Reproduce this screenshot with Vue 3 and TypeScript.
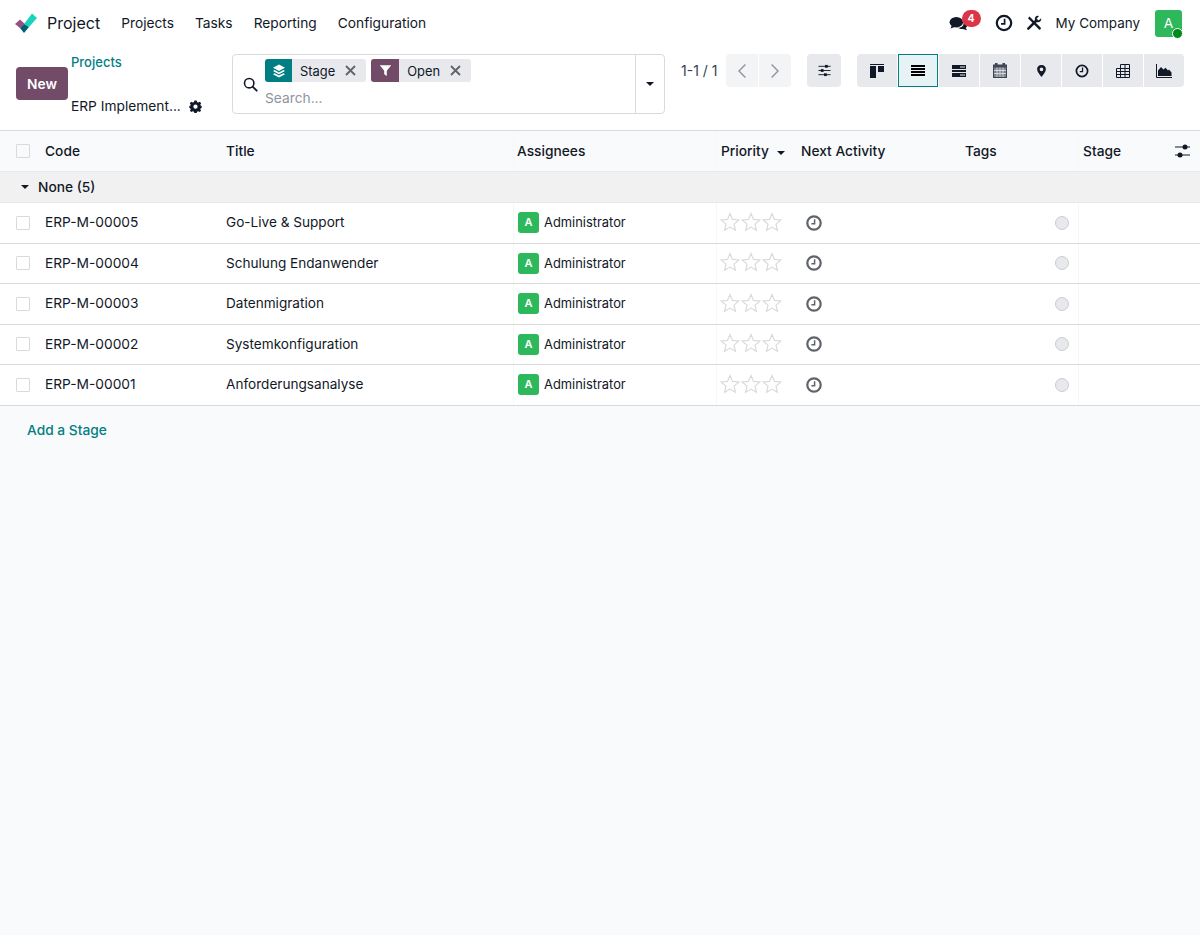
<script setup lang="ts">
const navItems = ["Projects", "Tasks", "Reporting", "Configuration"];
const tasks = [
  { code: "ERP-M-00005", title: "Go-Live & Support" },
  { code: "ERP-M-00004", title: "Schulung Endanwender" },
  { code: "ERP-M-00003", title: "Datenmigration" },
  { code: "ERP-M-00002", title: "Systemkonfiguration" },
  { code: "ERP-M-00001", title: "Anforderungsanalyse" },
];
const views = ["kanban", "list", "form", "calendar", "map", "activity", "pivot", "graph"];
</script>

<template>
  <div class="page">
    <header class="navbar">
      <svg class="logo" viewBox="0 0 24 24" width="24" height="24">
        <path d="M1 13 L6 8.5 L12 14 L6 17 Z" fill="#985184" />
        <path d="M6 17 L11 13 L15 16 L10 22 Z" fill="#005e7a" />
        <path d="M10 13 L18 2.5 L23 7 L15 16 Z" fill="#1ad3bb" />
      </svg>
      <span class="app-name">Project</span>
      <nav class="nav-items">
        <a v-for="item in navItems" :key="item">{{ item }}</a>
      </nav>
      <div class="systray">
        <span class="chat">
          <svg viewBox="0 0 22 18" width="20" height="16">
            <ellipse cx="8" cy="7" rx="7.6" ry="5.8" fill="#111827" />
            <path d="M3 10 L1.5 14 L7 12 Z" fill="#111827" />
            <path d="M16 6.5 C19 7.5 20.4 9 20.2 10.8 C20 12.2 19.2 13 18.6 13.5 L20 16 L15.4 14.6 C13.4 14.8 11.4 14.4 10 13.2 C13.4 13.4 17 11.4 16 6.5 Z" fill="#111827" />
          </svg>
          <b class="badge">4</b>
        </span>
        <svg class="tray-clock" viewBox="0 0 18 18" width="18" height="18">
          <circle cx="9" cy="9" r="7.2" fill="none" stroke="#111827" stroke-width="2.2" />
          <path d="M9.6 4.8 V9.8 H6" fill="none" stroke="#111827" stroke-width="1.7" />
        </svg>
        <svg class="tools" viewBox="0 0 16 16" width="16" height="16">
          <path d="M2 3.2 L3.4 1.6 L14.6 12.6 Q15.2 13.4 14.6 14.2 Q13.8 15 13 14.4 Z" fill="#111827" />
          <path d="M15.2 3.2 L12.6 5.6 L10.6 3.8 L13 1 Q10.6 0.4 9.4 2 Q8.4 3.4 9 5 L1.4 12.8 Q0.6 13.8 1.4 14.6 Q2.2 15.4 3.2 14.6 L10.8 7 Q12.8 7.6 14.2 6.4 Q15.6 5.2 15.2 3.2 Z" fill="#111827" />
        </svg>
        <span class="company">My Company</span>
        <span class="user-avatar">A<i class="online"></i></span>
      </div>
    </header>

    <section class="control-panel">
      <button class="btn-new">New</button>
      <div class="breadcrumb">
        <a class="crumb-link">Projects</a>
        <div class="crumb-current">
          <span>ERP Implement...</span>
          <svg viewBox="0 0 16 16" width="13" height="13">
            <path fill="#111827" fill-rule="evenodd" d="M6.6 0.6 H9.4 L9.9 2.6 L11.4 3.2 L13.2 2.1 L15 4 L13.9 5.8 L14.5 7.2 L15.6 7.5 V9.9 L14.5 10.2 L13.9 11.6 L14.9 13.2 L13.1 14.9 L11.4 13.9 L9.9 14.5 L9.4 15.9 H6.6 L6.1 14.5 L4.6 13.9 L2.9 14.9 L1.1 13.2 L2.1 11.6 L1.5 10.2 L0.4 9.9 V7.5 L1.5 7.2 L2.1 5.8 L1 4 L2.8 2.1 L4.6 3.2 L6.1 2.6 Z M8 5.6 A2.6 2.6 0 1 0 8 10.8 A2.6 2.6 0 1 0 8 5.6 Z" />
          </svg>
        </div>
      </div>

      <div class="search">
        <svg class="search-icon" viewBox="0 0 16 16" width="15" height="15">
          <circle cx="6.6" cy="6.6" r="5" fill="none" stroke="#111827" stroke-width="1.7" />
          <path d="M10.3 10.3 L14.6 14.6" stroke="#111827" stroke-width="2" stroke-linecap="round" />
        </svg>
        <div class="search-main">
          <div class="facets">
            <span class="facet">
              <span class="facet-icon teal">
                <svg viewBox="0 0 14 14" width="14" height="14">
                  <path d="M7 0.6 L13 3.8 L7 7 L1 3.8 Z" fill="#fff" />
                  <path d="M2.6 6 L1 7 L7 10.2 L13 7 L11.4 6 L7 8.4 Z" fill="#fff" />
                  <path d="M2.6 9.2 L1 10.2 L7 13.4 L13 10.2 L11.4 9.2 L7 11.6 Z" fill="#fff" />
                </svg>
              </span>
              <span class="facet-label">Stage</span>
              <svg class="facet-x" viewBox="0 0 11 11" width="11" height="11">
                <path d="M1 1 L10 10 M10 1 L1 10" stroke="#5f636a" stroke-width="1.8" />
              </svg>
            </span>
            <span class="facet">
              <span class="facet-icon plum">
                <svg viewBox="0 0 14 14" width="13" height="13">
                  <path d="M0.8 1.4 H13.2 L8.4 7.2 V13 L5.6 11 V7.2 Z" fill="#fff" />
                </svg>
              </span>
              <span class="facet-label">Open</span>
              <svg class="facet-x" viewBox="0 0 11 11" width="11" height="11">
                <path d="M1 1 L10 10 M10 1 L1 10" stroke="#5f636a" stroke-width="1.8" />
              </svg>
            </span>
          </div>
          <span class="placeholder">Search...</span>
        </div>
        <div class="search-toggle"><i class="caret"></i></div>
      </div>

      <div class="pager">
        <span class="pager-value">1-1 / 1</span>
        <div class="pager-btns">
          <button>
            <svg viewBox="0 0 10 16" width="10" height="16"><path d="M8.4 1.6 L2 8 L8.4 14.4" fill="none" stroke="#8f959e" stroke-width="1.4" /></svg>
          </button>
          <button>
            <svg viewBox="0 0 10 16" width="10" height="16"><path d="M1.6 1.6 L8 8 L1.6 14.4" fill="none" stroke="#8f959e" stroke-width="1.4" /></svg>
          </button>
        </div>
      </div>

      <button class="settings-btn">
        <svg viewBox="0 0 14 14" width="13" height="13">
          <path d="M0.5 2.5 H13.5 M0.5 7 H13.5 M0.5 11.5 H13.5" stroke="#111827" stroke-width="1" />
          <rect x="7.5" y="1" width="3" height="3" fill="#111827" />
          <rect x="3" y="5.5" width="3" height="3" fill="#111827" />
          <rect x="6.5" y="10" width="3" height="3" fill="#111827" />
        </svg>
      </button>

      <div class="view-switch">
        <button v-for="view in views" :key="view" :class="{ active: view === 'list' }">
          <svg v-if="view === 'kanban'" viewBox="0 0 14 14" width="14" height="14">
            <path d="M0 0 H14 V1 H0 Z M0 2 H6 V14 H0 Z M8 2 H14 V8 H8 Z" fill="#111827" />
          </svg>
          <svg v-else-if="view === 'list'" viewBox="0 0 14 11" width="14" height="11">
            <path d="M0 0 H14 V2 H0 Z M0 3 H14 V5 H0 Z M0 6 H14 V8 H0 Z M0 9 H14 V11 H0 Z" fill="#000" />
          </svg>
          <svg v-else-if="view === 'form'" viewBox="0 0 14 12" width="14" height="12">
            <path fill="#111827" d="M0 0 H14 V4 H0 Z M0 5 H14 V7 H0 Z M0 8 H14 V12 H0 Z" />
            <path d="M8 1.5 H13 V2.5 H8 Z M8 9.5 H13 V10.5 H8 Z" fill="#e7e9ed" />
          </svg>
          <svg v-else-if="view === 'calendar'" viewBox="0 0 14 15" width="14" height="15">
            <path fill="#3f4552" d="M2 0 H4.5 V1.5 H9.5 V0 H12 V1.5 H14 V15 H0 V1.5 H2 Z" />
            <path fill="#7d818b" d="M1 4.5 H13 V14 H1 Z" />
            <path stroke="#e7e9ed" stroke-width="0.8" d="M1 7.5 H13 M1 10.5 H13 M4 4.5 V14 M7 4.5 V14 M10 4.5 V14" />
          </svg>
          <svg v-else-if="view === 'map'" viewBox="0 0 16 16" width="13" height="14">
            <path fill="#111827" fill-rule="evenodd" d="M8 0.6 C11.3 0.6 13.4 3 13.4 5.8 C13.4 8.8 10 12.8 8 15.4 C6 12.8 2.6 8.8 2.6 5.8 C2.6 3 4.7 0.6 8 0.6 Z M8 3.6 A2.3 2.3 0 1 0 8 8.2 A2.3 2.3 0 1 0 8 3.6 Z" />
          </svg>
          <svg v-else-if="view === 'activity'" viewBox="0 0 16 16" width="14" height="14">
            <circle cx="8" cy="8" r="6.4" fill="none" stroke="#111827" stroke-width="2" />
            <path d="M8.6 4 V8.8 H5.4" fill="none" stroke="#111827" stroke-width="1.5" />
          </svg>
          <svg v-else-if="view === 'pivot'" viewBox="0 0 14 14" width="14" height="14">
            <path fill="none" stroke="#111827" stroke-width="1" d="M4.5 0.5 H13.5 V13.5 H0.5 V4.5 H13.5 M0.5 7.5 H13.5 M0.5 10.5 H13.5 M4.5 0.5 V13.5 M9 0.5 V13.5" />
          </svg>
          <svg v-else viewBox="0 0 16 14" width="16" height="14">
            <path d="M0.5 0 V13.5 H16" fill="none" stroke="#111827" stroke-width="1" />
            <path d="M2 12 V6.5 L5 3 L7.5 5.5 L9.5 3.8 L12 6.5 L13 5.5 L15.5 8.5 V12 Z" fill="#111827" />
          </svg>
        </button>
      </div>
    </section>

    <main class="list">
      <div class="row head">
        <div class="cell check"><i class="box"></i></div>
        <div class="cell code">Code</div>
        <div class="cell title">Title</div>
        <div class="cell assignee">Assignees</div>
        <div class="cell priority">Priority <i class="caret sort"></i></div>
        <div class="cell activity">Next Activity</div>
        <div class="cell tags">Tags</div>
        <div class="cell stage">Stage</div>
        <div class="cell optional">
          <svg viewBox="0 0 15 14" width="15" height="14">
            <path d="M0 3 H15 M0 11 H15" stroke="#111827" stroke-width="1" />
            <circle cx="10" cy="3" r="2.5" fill="#111827" />
            <circle cx="5" cy="11" r="2.5" fill="#111827" />
          </svg>
        </div>
      </div>

      <div class="group-row">
        <i class="caret"></i>
        <span>None (5)</span>
      </div>

      <div v-for="task in tasks" :key="task.code" class="row task">
        <div class="cell check"><i class="box"></i></div>
        <div class="cell code">{{ task.code }}</div>
        <div class="cell title">{{ task.title }}</div>
        <div class="cell assignee">
          <span class="mini-avatar">A</span>
          <span class="assignee-name">Administrator</span>
        </div>
        <div class="cell priority stars">
          <svg v-for="n in 3" :key="n" viewBox="0 0 20 20" width="20" height="20">
            <path d="M10 1.6 L12.5 7.4 L18.8 8 L14 12.1 L15.4 18.3 L10 15.1 L4.6 18.3 L6 12.1 L1.2 8 L7.5 7.4 Z" fill="none" stroke="#d8dadd" stroke-width="1.2" />
          </svg>
        </div>
        <div class="cell activity next">
          <svg viewBox="0 0 16 16" width="16" height="16">
            <circle cx="8" cy="8" r="6.7" fill="none" stroke="#5f636a" stroke-width="2.2" />
            <path d="M8.6 4.2 V8.8 H5.4" fill="none" stroke="#5f636a" stroke-width="1.5" />
          </svg>
        </div>
        <div class="cell tags state"><i class="dot"></i></div>
        <div class="cell stage"></div>
        <div class="cell optional"></div>
      </div>

      <a class="add-stage">Add a Stage</a>
    </main>
  </div>
</template>

<style scoped>
  .page {
    min-height: 935px;
    display: flex;
    flex-direction: column;
    background: #f9fafb;
    color: #111827;
    font-family: Inter, "Liberation Sans", sans-serif;
    font-size: 13.75px;
  }

  .navbar {
    height: 46px;
    display: flex;
    align-items: center;
    background: #fff;
    padding: 0 18px 0 14px;
  }

  .logo { flex: none; }

  .app-name {
    margin-left: 9px;
    font-size: 16px;
  }

  .nav-items {
    display: flex;
    gap: 21px;
    margin-left: 21px;
  }

  .systray {
    margin-left: auto;
    display: flex;
    align-items: center;
  }

  .chat {
    position: relative;
    display: flex;
    margin-top: 2px;
  }

  .badge {
    position: absolute;
    left: 13px;
    top: -6px;
    width: 19px;
    height: 17px;
    border-radius: 9px;
    background: #dc3545;
    color: #fff;
    font-size: 10.5px;
    text-align: center;
    line-height: 17px;
  }

  .tray-clock { margin-left: 26px; }
  .tools { margin-left: 13px; }
  .company { margin-left: 14px; font-size: 13.45px; }

  .user-avatar {
    position: relative;
    width: 27px;
    height: 27px;
    margin-left: 15px;
    border-radius: 3px;
    background: #2eb85c;
    color: #fff;
    text-align: center;
    line-height: 27px;
  }

  .online {
    position: absolute;
    right: -1px;
    bottom: -2px;
    width: 9px;
    height: 9px;
    border-radius: 50%;
    background: #008a17;
    border: 1px solid #fff;
  }

  .control-panel {
    height: 85px;
    box-sizing: border-box;
    display: flex;
    align-items: flex-start;
    background: #fff;
    border-bottom: 1px solid #d8dadd;
    padding: 8px 16px 0;
  }

  .btn-new {
    width: 52px;
    height: 33px;
    margin-top: 13px;
    border: 0;
    border-radius: 4px;
    background: #714b67;
    color: #fff;
    font: 600 13.75px Inter, sans-serif;
    padding: 0;
  }

  .breadcrumb {
    width: 161px;
    margin-left: 3px;
    display: flex;
    flex-direction: column;
    gap: 27px;
  }

  .crumb-link {
    color: #017e84;
    font-size: 13px;
    font-weight: 500;
    line-height: 17px;
  }

  .crumb-current {
    display: flex;
    align-items: center;
    gap: 8px;
    line-height: 17px;
  }

  .search {
    width: 433px;
    height: 60px;
    box-sizing: border-box;
    display: flex;
    align-items: center;
    border: 1px solid #d8dadd;
    border-radius: 4px;
  }

  .search-icon { margin-left: 10px; flex: none; }

  .search-main {
    flex: 1;
    align-self: flex-start;
    padding: 4px 0 0 7px;
    display: flex;
    flex-direction: column;
    gap: 8px;
  }

  .facets { display: flex; gap: 5px; }

  .facet {
    height: 23px;
    display: flex;
    align-items: center;
    background: #e7e9ed;
    border-radius: 3px;
    font-size: 12.9px;
  }

  .facet-icon {
    width: 27px;
    height: 23px;
    display: flex;
    align-items: center;
    justify-content: center;
    border-radius: 3px 0 0 3px;
  }

  .facet-icon.teal { background: #017e84; }
  .facet-icon.plum { width: 28px; background: #714b67; }
  .facet-label { margin-left: 8px; padding-top: 2px; }

  .facet-x { margin: 0 10px; flex: none; }

  .placeholder {
    color: #8f959e;
    font-size: 13.75px;
    line-height: 17px;
  }

  .search-toggle {
    width: 28px;
    height: 100%;
    display: flex;
    align-items: center;
    justify-content: center;
    border-left: 1px solid #d8dadd;
  }

  .caret {
    display: inline-block;
    width: 0;
    height: 0;
    border-left: 4px solid transparent;
    border-right: 4px solid transparent;
    border-top: 4px solid #111827;
  }

  .pager {
    display: flex;
    align-items: center;
    margin-left: 16px;
  }

  .pager-value { width: 37px; font-size: 14px; white-space: nowrap; color: #374151; }

  .pager-btns {
    display: flex;
    gap: 1px;
    margin-left: 8px;
  }

  .pager-btns button {
    width: 32px;
    height: 33px;
    border: 0;
    padding: 0;
    background: #f3f4f6;
    display: flex;
    align-items: center;
    justify-content: center;
  }

  .pager-btns button:first-child { border-radius: 4px 0 0 4px; }
  .pager-btns button:last-child { border-radius: 0 4px 4px 0; }

  .settings-btn {
    width: 34px;
    height: 33px;
    margin-left: 16px;
    border: 0;
    padding: 0;
    border-radius: 4px;
    background: #e7e9ed;
    display: flex;
    align-items: center;
    justify-content: center;
  }

  .view-switch {
    display: flex;
    margin-left: 16px;
    gap: 1px;
  }

  .view-switch button {
    width: 40px;
    height: 33px;
    border: 0;
    padding: 0;
    background: #e7e9ed;
    display: flex;
    align-items: center;
    justify-content: center;
  }

  .view-switch button:first-child { border-radius: 4px 0 0 4px; }
  .view-switch button:last-child { border-radius: 0 4px 4px 0; }

  .view-switch button.active {
    background: #e6f2f3;
    border: 1px solid #017e84;
  }

  .list { flex: 1; }

  .row {
    display: grid;
    grid-template-columns: 37px 181px 295px 203px 77px 164px 121px 1fr 37px;
    align-items: center;
    background: #fff;
    box-sizing: border-box;
    border-bottom: 1px solid #d8dadd;
  }

  .cell { padding-left: 8px; }

  .row.head {
    height: 41px;
    background: #f9fafb;
    font-weight: 500;
    border-bottom-color: #e7e9ed;
  }

  .row.task { height: 40.5px; }

  .task .code, .task .title { padding-bottom: 1px; }
  .task .title { font-size: 13.6px; }

  .cell.assignee, .cell.priority, .cell.stage {
    align-self: stretch;
    box-shadow: inset 1px 0 0 #f6f7f8;
    display: flex;
    align-items: center;
  }

  .cell.assignee { padding-left: 4px; }
  .cell.priority { padding-left: 5px; }
  .cell.stage { padding-left: 5px; }

  .check { padding-left: 16px; display: flex; }

  .box {
    width: 12px;
    height: 12px;
    border: 1px solid #d8dadd;
    background: #fff;
    border-radius: 1px;
  }

  .head .box { background: #f9fafb; }

  .sort { margin-left: 8px; margin-top: 3px; }

  .cell.optional { padding-left: 12px; display: flex; }

  .group-row {
    height: 31px;
    box-sizing: border-box;
    display: flex;
    align-items: center;
    gap: 9px;
    padding-left: 21px;
    background: #f1f1f1;
    border-bottom: 1px solid #e7e9ed;
    font-weight: 500;
  }

  .task .cell.assignee {
    padding-left: 5px;
    gap: 5px;
  }

  .mini-avatar {
    width: 21px;
    height: 21px;
    border-radius: 3px;
    background: #2eb85c;
    color: #fff;
    font-size: 11px;
    font-weight: 600;
    text-align: center;
    line-height: 21px;
  }

  .assignee-name { font-size: 12.9px; }

  .task .cell.stars { gap: 1px; padding: 0 0 2px 4px; }

  .next { padding-left: 13px; display: flex; }

  .state { padding-left: 98px; display: flex; }

  .dot {
    width: 12px;
    height: 12px;
    border: 1px solid #c9ccd2;
    border-radius: 50%;
    background: #e7e9ed;
  }

  .add-stage {
    display: block;
    margin: 16px 0 0 27px;
    color: #017e84;
    font-weight: 500;
    line-height: 17px;
  }
</style>

<style>
  body { background: #f9fafb; }
</style>
